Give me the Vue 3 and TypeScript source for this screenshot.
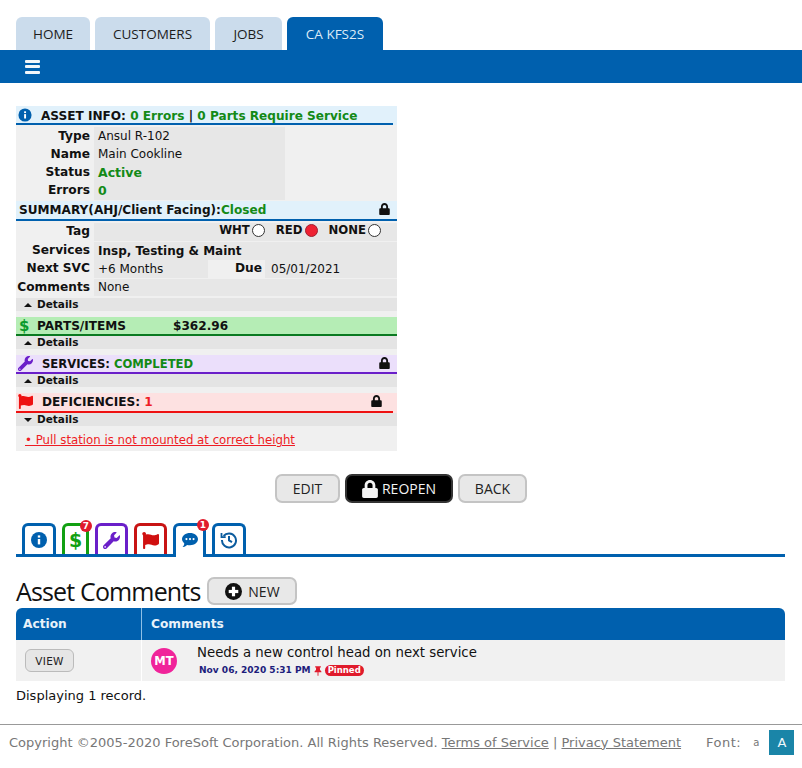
<script setup lang="ts">
const navTabs = [
  { label: 'HOME', width: 74, active: false },
  { label: 'CUSTOMERS', width: 115, active: false },
  { label: 'JOBS', width: 67, active: false },
  { label: 'CA KFS2S', width: 96, active: true },
]
const lockPath = 'M400 224h-24v-72C376 68.2 307.8 0 224 0S72 68.2 72 152v72H48c-26.5 0-48 21.5-48 48v192c0 26.5 21.5 48 48 48h352c26.5 0 48-21.5 48-48V272c0-26.5-21.5-48-48-48zm-104 0H152v-72c0-39.7 32.3-72 72-72s72 32.3 72 72v72z'
const wrenchPath = 'M507.73 109.1c-2.24-9.03-13.54-12.09-20.12-5.51l-74.36 74.36-67.88-11.31-11.31-67.88 74.36-74.36c6.62-6.62 3.43-17.9-5.66-20.16-47.38-11.74-99.55.91-136.58 37.93-39.64 39.64-50.55 97.1-34.05 147.2L18.74 402.76c-24.99 24.99-24.99 65.51 0 90.5 24.99 24.99 65.51 24.99 90.5 0l213.21-213.21c50.12 16.71 107.47 5.68 147.37-34.22 37.07-37.07 49.7-89.32 37.91-136.73zM64 472c-13.25 0-24-10.75-24-24 0-13.26 10.75-24 24-24s24 10.74 24 24c0 13.25-10.75 24-24 24z'
const flagPath = 'M349.565 98.783C295.978 98.783 251.721 64 184.348 64c-24.955 0-47.309 4.384-68.045 12.013a55.947 55.947 0 0 0 3.586-23.562C118.117 24.015 94.806 1.206 66.338.048 34.345-1.254 8 24.296 8 56c0 19.026 9.497 35.825 24 45.945V488c0 13.255 10.745 24 24 24h16c13.255 0 24-10.745 24-24v-94.4c28.311-12.064 63.582-22.122 114.435-22.122 53.588 0 97.844 34.783 165.217 34.783 48.169 0 86.667-16.294 122.505-40.858C506.84 359.452 512 349.571 512 339.045v-243.1c0-23.393-24.269-38.87-45.485-29.016-34.338 15.948-76.454 31.854-116.95 31.854z'
</script>

<template>
  <div class="page">
    <nav class="nav-tabs">
      <a v-for="t in navTabs" :key="t.label" class="nav-tab" :class="{ active: t.active }" :style="{ width: t.width + 'px' }">{{ t.label }}</a>
    </nav>
    <div class="menu-bar">
      <span class="burger"><i></i><i></i><i></i></span>
    </div>

    <section class="panel">
      <header class="head head-info">
        <svg class="ico-info" viewBox="0 0 16 16"><circle cx="8" cy="8" r="7.500" fill="#0060ae" /><rect x="7" y="7" width="2.200" height="5" fill="#fff" /><rect x="7" y="3.800" width="2.200" height="2" fill="#fff" /></svg>
        <span class="head-text">ASSET INFO: <b class="green">0 Errors</b> | <b class="green">0 Parts Require Service</b></span>
      </header>
      <div class="info-rows">
        <div class="row"><label>Type</label><span class="val">Ansul R-102</span></div>
        <div class="row"><label>Name</label><span class="val">Main Cookline</span></div>
        <div class="row"><label>Status</label><span class="val green strong">Active</span></div>
        <div class="row"><label>Errors</label><span class="val green strong">0</span></div>
      </div>

      <header class="head head-summary">
        <span class="head-text summary-text">SUMMARY(AHJ/Client Facing):<b class="green">Closed</b></span>
        <svg class="lock" viewBox="0 0 448 512"><path :d="lockPath" /></svg>
      </header>
      <div class="sum-rows">
        <div class="row wide"><label>Tag</label>
          <span class="val tag-val">
            <span class="radio-item">WHT<i class="radio"></i></span>
            <span class="radio-item">RED<i class="radio on"></i></span>
            <span class="radio-item">NONE<i class="radio"></i></span>
          </span>
        </div>
        <div class="row wide"><label>Services</label><span class="val strong svc-val">Insp, Testing &amp; Maint</span></div>
        <div class="row wide split"><label>Next SVC</label><span class="val svc-val">+6 Months</span><label class="due">Due</label><span class="val date-val svc-val">05/01/2021</span></div>
        <div class="row wide"><label>Comments</label><span class="val">None</span></div>
      </div>
      <div class="details first"><i class="caret up"></i>Details</div>

      <header class="head head-parts">
        <span class="dollar">$</span>
        <span class="head-text parts-name">PARTS/ITEMS</span>
        <span class="head-text">$362.96</span>
      </header>
      <div class="details"><i class="caret up"></i>Details</div>

      <header class="head head-services">
        <svg class="ico-wrench" viewBox="0 0 512 512"><path :d="wrenchPath" /></svg>
        <span class="head-text services-text">SERVICES: <b class="green">COMPLETED</b></span>
        <svg class="lock" viewBox="0 0 448 512"><path :d="lockPath" /></svg>
      </header>
      <div class="details"><i class="caret up"></i>Details</div>

      <header class="head head-def">
        <svg class="ico-flag" viewBox="0 0 512 512"><path :d="flagPath" /></svg>
        <span class="head-text">DEFICIENCIES: <b class="red">1</b></span>
        <svg class="lock" viewBox="0 0 448 512"><path :d="lockPath" /></svg>
      </header>
      <div class="details open"><i class="caret down"></i>Details</div>
      <div class="def-list"><a>• Pull station is not mounted at correct height</a></div>
    </section>

    <div class="actions">
      <button class="btn btn-edit">EDIT</button>
      <button class="btn btn-reopen">
        <svg viewBox="0 0 448 512"><path :d="lockPath" /></svg>REOPEN
      </button>
      <button class="btn btn-back">BACK</button>
    </div>

    <div class="icon-tabs">
      <span class="itab edge" style="--c:#0060ae">
        <svg class="s-info" viewBox="0 0 16 16"><circle cx="8" cy="8" r="8" fill="#0060ae" /><rect x="6.800" y="7" width="2.400" height="5.400" fill="#fff" /><rect x="6.800" y="3.400" width="2.400" height="2.200" fill="#fff" /></svg>
      </span>
      <span class="itab narrow" style="--c:#12a012">
        <span class="itab-dollar">$</span>
        <b class="badge">7</b>
      </span>
      <span class="itab" style="--c:#6a1fc9">
        <svg class="s-icon" viewBox="0 0 512 512" fill="#6a1fc9"><path :d="wrenchPath" /></svg>
      </span>
      <span class="itab" style="--c:#c81414">
        <svg class="s-icon" viewBox="0 0 512 512" fill="#d01010"><path :d="flagPath" /></svg>
      </span>
      <span class="itab current" style="--c:#0060ae">
        <svg class="s-comment" viewBox="0 0 20 18"><path d="M10 1c5 0 9 3 9 7s-4 7-9 7c-1.200 0-2.300-.2-3.300-.5C5.500 15.600 3.500 16.800 1.500 17c1.200-1.200 2-2.700 2.100-4.200C2 11.500 1 9.900 1 8c0-4 4-7 9-7z" fill="#0060ae" /><circle cx="6" cy="8" r="1.200" fill="#fff" /><circle cx="10" cy="8" r="1.200" fill="#fff" /><circle cx="14" cy="8" r="1.200" fill="#fff" /></svg>
        <b class="badge">1</b>
      </span>
      <span class="itab edge" style="--c:#0060ae">
        <svg class="s-hist" viewBox="0 0 18 18" fill="none" stroke="#0c5c9e" stroke-width="2"><path d="M3.600 5A7 7 0 1 1 2 9" /><path d="M1.500 2v4.200h4.200" stroke-width="1.800" /><path d="M9 5v4.400l3 1.800" /></svg>
      </span>
    </div>

    <div class="title-row">
      <h1>Asset Comments</h1>
      <button class="btn btn-new">
        <svg viewBox="0 0 16 16"><circle cx="8" cy="8" r="8" fill="#111" /><rect x="6.500" y="3.500" width="3" height="9" fill="#fff" /><rect x="3.500" y="6.500" width="9" height="3" fill="#fff" /></svg>NEW
      </button>
    </div>

    <div class="table">
      <div class="thead"><div class="th th-a">Action</div><div class="th th-c">Comments</div></div>
      <div class="tbody">
        <div class="td-a"><button class="btn-view">VIEW</button></div>
        <div class="td-c">
          <span class="avatar">MT</span>
          <div class="comment">
            <div class="comment-text">Needs a new control head on next service</div>
            <div class="comment-meta">
              <span class="date">Nov 06, 2020 5:31 PM</span>
              <svg class="pin" viewBox="0 0 384 512"><path d="M298 214l-10-134h36c8 0 14-6 14-14V30c0-8-6-14-14-14H60c-8 0-14 6-14 14v36c0 8 6 14 14 14h36L86 214C40 236 16 272 16 308c0 8 6 14 14 14h138v160l24 24 24-24V322h138c8 0 14-6 14-14 0-36-24-72-70-94z" /></svg>
              <span class="pinned">Pinned</span>
            </div>
          </div>
        </div>
      </div>
    </div>
    <p class="count">Displaying 1 record.</p>

    <footer class="footer">
      <span class="copy">Copyright ©2005-2020 ForeSoft Corporation. All Rights Reserved. <a>Terms of Service</a> | <a>Privacy Statement</a></span>
      <span class="font-label">Font:</span>
      <span class="font-small">a</span>
      <span class="font-big">A</span>
    </footer>
  </div>
</template>

<style>
html, body { margin: 0; background: #fff; }
</style>

<style scoped>
.page { width: 802px; height: 768px; overflow: hidden; font-family: "DejaVu Sans", Verdana, sans-serif; font-size: 12px; color: #111; }
.nav-tabs { display: flex; gap: 5px; padding: 17px 0 0 16px; height: 33px; }
.nav-tab { height: 33px; text-align: center; background: #cbdcec; border-radius: 6px 6px 0 0; font: 13.500px/35px "Open Sans", Tahoma, sans-serif; color: #1c1c1c; }
.nav-tab.active { background: #0060ae; color: #dcebf7; }
.menu-bar { height: 33px; background: #0060ae; display: flex; align-items: center; padding-left: 25px; }
.burger { display: flex; flex-direction: column; gap: 2.500px; width: 15px; }
.burger i { height: 3px; background: #f2f6fa; border-radius: 1px; }

.panel { width: 381px; margin: 23px 0 0 16px; background: #f0f0f0; }
.head { display: flex; align-items: center; position: relative; box-sizing: border-box; height: 19px; border-bottom: 2px solid; }
.head-text { font-weight: 700; font-size: 12.100px; white-space: nowrap; }
.head b { font-weight: 700; }
.green { color: #138a17; }
.red { color: #ee1c24; }
.strong { font-weight: 700; }
.head-info { background: #e1f1fb; border-color: #0060ae; width: 377px; box-shadow: 4px 0 0 #e1f1fb; padding-top: 2px; }
.ico-info { width: 14px; height: 14px; margin: -1px 9px 0 2px; flex: none; }
.info-rows { padding: 2px 112px 1px 0; display: grid; gap: 1px; }
.row { display: grid; grid-template-columns: 74px 1fr; column-gap: 4px; height: 17px; align-items: stretch; }
.row label { text-align: right; font-weight: 700; font-size: 12.200px; line-height: 19px; white-space: nowrap; }
.row .val { background: #e7e7e7; font-size: 12px; line-height: 16px; padding-left: 4px; white-space: nowrap; }
.info-rows .val { line-height: 19px; }
.info-rows .val.strong { font-size: 12.500px; }
.head-summary { background: #e1f1fb; border-color: #0060ae; margin-top: 2px; height: 20px; padding-left: 3px; }
.lock { width: 11px; height: 12px; fill: #111; position: absolute; right: 7px; top: 2px; }
.sum-rows { padding-top: 2px; display: grid; gap: 1px; }
.wide { height: 17.500px; }
.wide label { line-height: 17px; }
.row .svc-val { line-height: 18px; }
.row .tag-val { display: flex; justify-content: flex-end; align-items: flex-start; gap: 11px; padding-right: 16px; font-weight: 700; font-size: 11.700px; line-height: 15px; }
.radio-item { display: flex; align-items: center; gap: 2px; }
.radio { box-sizing: border-box; width: 13px; height: 13px; border-radius: 50%; border: 1px solid #333; background: #fff; display: inline-block; }
.radio.on { background: #ee2233; border-color: #a02030; }
.split { grid-template-columns: 74px 118px 57px 1fr; column-gap: 0; }
.split > .val:nth-child(2) { margin-left: 4px; }
.split .due { background: #f0f0f0; padding-right: 3px; margin: 0; }
.row .date-val { padding-left: 6px; }
.details { height: 13px; background: #e4e4e4; font-size: 10.500px; font-weight: 700; line-height: 13px; padding-left: 8px; display: flex; align-items: center; gap: 5px; }
.details.first { margin-top: 2px; }
.caret { width: 0; height: 0; border-left: 4px solid transparent; border-right: 4px solid transparent; }
.caret.up { border-bottom: 4px solid #111; }
.caret.down { border-top: 4px solid #111; }
.head-parts { background: #b5edb5; border-color: #0a7a20; margin-top: 6px; }
.dollar { color: #0a9a2a; font-weight: 700; font-size: 15px; width: 21px; padding-left: 3px; box-sizing: border-box; }
.parts-name { width: 136px; }
.head-services { background: #ebdffb; border-color: #6a1fc9; margin-top: 6px; }
.services-text { font-size: 11.600px; }
.ico-wrench { width: 15px; height: 15px; fill: #6a1fc9; margin: 0 9px 0 2px; flex: none; }
.head-def { background: #fde1e1; border-color: #ee1111; margin-top: 6px; height: 20px; padding-bottom: 1px; width: 377px; box-shadow: 4px 0 0 #fde1e1; }
.head-def .lock { right: 11px; }
.ico-flag { width: 15px; height: 15px; fill: #ee1111; margin: 0 9px 0 2px; flex: none; }
.def-list { height: 25px; padding: 7px 0 0 9px; box-sizing: border-box; font-size: 11.750px; color: #ee1c24; }
.def-list a { text-decoration: underline; }

.actions { display: flex; justify-content: center; gap: 5px; margin-top: 23px; }
.btn { box-sizing: border-box; height: 29px; border: 2px solid #c4c4c4; border-radius: 7px; background: #e8e8e8; font: 14px "Open Sans", Tahoma, sans-serif; color: #222; padding: 0; display: inline-flex; align-items: center; justify-content: center; }
.btn-edit { width: 65px; }
.btn-back { width: 69px; }
.btn-reopen { width: 108px; background: #000; border-color: #333; color: #f4f4f4; gap: 4px; }
.btn-reopen svg { width: 16px; height: 18px; fill: #f4f4f4; }

.icon-tabs { display: flex; align-items: flex-end; gap: 6px; margin: 20px 17px 0 16px; padding-left: 6px; height: 31px; border-bottom: 3px solid #0060ae; }
.itab { position: relative; box-sizing: border-box; width: 33px; height: 31px; border: 3px solid var(--c); border-bottom: 0; border-radius: 6px 6px 0 0; display: flex; align-items: center; justify-content: center; background: #fff; }
.itab.edge { width: 34px; }
.itab.narrow { width: 27px; }
.itab.current { height: 34px; margin-bottom: -3px; }
.s-info { width: 16px; height: 16px; }
.s-icon { width: 17px; height: 17px; }
.s-comment { width: 18px; height: 16px; margin-top: -3px; }
.s-hist { width: 18px; height: 18px; }
.itab-dollar { color: #12a012; font-weight: 700; font-size: 19px; line-height: 1; }
.badge { position: absolute; right: -6px; top: -6px; width: 12px; height: 12px; border-radius: 50%; background: #e01b2c; color: #fff; font-size: 9px; line-height: 12px; text-align: center; }
.current .badge { right: -6px; top: -7px; }

.title-row { display: flex; align-items: center; gap: 7px; margin: 20px 0 0 16px; height: 28px; }
h1 { margin: 0; font: 400 25px/28px "Open Sans", Tahoma, sans-serif; color: #111; letter-spacing: -0.850px; white-space: nowrap; }
.btn-new { width: 90px; height: 28px; gap: 6px; }
.btn-new svg { width: 17px; height: 17px; }

.table { margin: 3px 17px 0 16px; }
.thead { display: grid; grid-template-columns: 126px 1fr; height: 32px; background: #0060ae; border-radius: 6px 6px 0 0; color: #e8f2fa; font-weight: 700; font-size: 12.200px; line-height: 32px; }
.th-a { padding-left: 7px; border-right: 1px solid #8fc0e6; box-sizing: border-box; }
.th-c { padding-left: 9px; }
.tbody { display: grid; grid-template-columns: 126px 1fr; height: 41px; background: #f1f1f1; }
.td-a { display: flex; align-items: center; padding-left: 9px; border-right: 1px solid #fff; box-sizing: border-box; }
.btn-view { box-sizing: border-box; width: 49px; height: 23px; border: 1px solid #bbb; border-radius: 6px; background: #e6e6e6; font: 10.500px "DejaVu Sans", Verdana, sans-serif; padding: 0; color: #222; letter-spacing: .3px; }
.td-c { display: flex; align-items: center; padding-left: 9px; }
.avatar { width: 26px; height: 26px; border-radius: 50%; background: #f0249a; color: #fff; font-weight: 700; font-size: 11.500px; line-height: 26px; text-align: center; flex: none; }
.comment { margin-left: 20px; margin-top: 1px; }
.comment-text { font-size: 13.300px; line-height: 16px; margin-bottom: 3px; white-space: nowrap; }
.comment-meta { display: flex; align-items: center; margin-left: 2px; }
.date { color: #1d1d7c; font-weight: 700; font-size: 9.050px; line-height: 13px; }
.pin { width: 8px; height: 10px; fill: #e01b2c; margin: 0 3px; }
.pinned { background: #e01b2c; color: #fff; font-weight: 700; font-size: 8.500px; line-height: 11px; border-radius: 6px; padding: 0 3px; }
.count { margin: 7px 0 0 16px; font-size: 13px; line-height: 16px; }

.footer { display: flex; align-items: center; margin-top: 20px; border-top: 1px solid #999; height: 43px; padding: 0 0 8px 9px; color: #777; font-size: 13px; box-sizing: border-box; }
.copy { white-space: nowrap; }
.copy a { text-decoration: underline; }
.font-label { margin-left: 25px; letter-spacing: .5px; }
.font-small { margin-left: 12px; font-size: 10px; }
.font-big { margin-left: 10px; width: 25px; height: 25px; background: #1a85a8; color: #f0f8fb; font-size: 13px; line-height: 25px; text-align: center; }
</style>
